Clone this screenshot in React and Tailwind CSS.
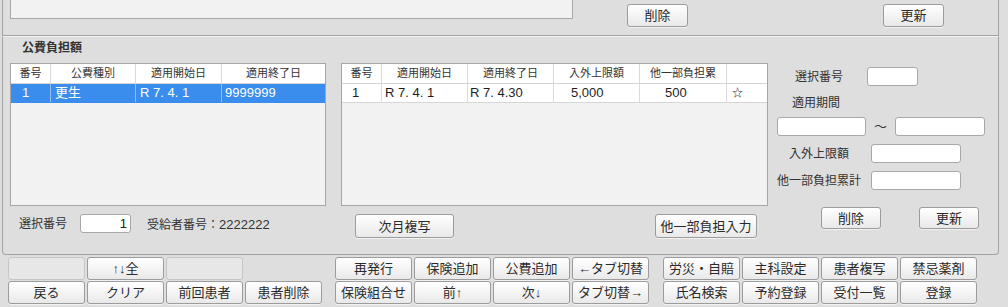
import React from "react";

const FONT = { fontFamily: '"Liberation Sans", "Noto Sans CJK JP", sans-serif' };

function Btn({ children, className = "" }) {
  return (
    <div
      className={
        "flex items-center justify-center rounded-[3px] border border-[#9c9c9c] bg-gradient-to-b from-[#ffffff] to-[#e9e9e9] text-[13px] leading-none text-[#2a2a2a] whitespace-nowrap shadow-[0_1px_0_rgba(255,255,255,0.6)] " +
        className
      }
    >
      {children}
    </div>
  );
}

function Blank() {
  return <div className="h-[23px] w-[77px] rounded-[3px] border border-[#c6c6c6] bg-[#e7e7e7]" />;
}

function Input({ className = "", children }) {
  return (
    <div
      className={
        "flex h-[19px] items-center rounded-[3px] border border-[#a8a8a8] bg-white text-[13px] text-[#222] " +
        className
      }
    >
      {children}
    </div>
  );
}

function Table({ cols, head, row, selected }) {
  return (
    <div className="h-[143px] w-full border border-[#a6a6a6] bg-[#f2f2f2]">
      <div className="flex h-[20px] border-b border-[#d6d6d6] bg-white">
        {cols.map((w, i) => (
          <div
            key={i}
            style={{ width: w }}
            className={
              "flex items-center justify-center text-[11px] text-[#333] whitespace-nowrap overflow-hidden " +
              (i < cols.length - 1 ? "border-r border-[#dadada]" : "")
            }
          >
            {head[i]}
          </div>
        ))}
      </div>
      <div
        className={
          "flex h-[19px] border-b " +
          (selected ? "bg-[#3a8dec] border-[#3a8dec] text-white" : "bg-white border-[#d6d6d6] text-[#1e1e1e]")
        }
      >
        {cols.map((w, i) => (
          <div
            key={i}
            style={{ width: w, paddingLeft: row[i][1] }}
            className={
              "flex items-center whitespace-nowrap overflow-hidden " +
              (row[i][0] === "☆" ? "text-[11px] " : "text-[13px] ") +
              (i < cols.length - 1 ? (selected ? "border-r border-[#8fc0f5]" : "border-r border-[#dadada]") : "")
            }
          >
            {row[i][0]}
          </div>
        ))}
      </div>
    </div>
  );
}

export default function App() {
  return (
    <div style={FONT} className="h-[307px] w-[1008px] overflow-hidden bg-[#dedede] text-[#2a2a2a]">
      {/* top section */}
      <div className="ml-[2px] flex h-[36px] w-[997px] items-start border-x border-b border-[#a2a2a2]">
        <div className="ml-[7px] h-[19px] w-[563px] border-x border-b border-[#a8a8a8] bg-[#f2f2f2]" />
        <Btn className="ml-[54px] mt-[4px] h-[23px] w-[61px]">削除</Btn>
        <Btn className="ml-[195px] mt-[4px] h-[23px] w-[61px]">更新</Btn>
      </div>

      {/* group */}
      <div className="ml-[2px] h-[219px] w-[997px] rounded-b-[4px] border-x border-b border-t border-[#a2a2a2] border-t-[#f3f3f3]">
        <div className="h-[26px] pl-[19px] pt-[3px] text-[12px] leading-[16px] font-bold text-[#333]">公費負担額</div>
        <div className="flex">
          {/* left column */}
          <div className="ml-[7px] w-[316px]">
            <Table
              cols={[40, 85, 86, 103]}
              head={["番号", "公費種別", "適用開始日", "適用終了日"]}
              row={[["1", 11], ["更生", 4], ["R 7. 4. 1", 4], ["9999999", 3]]}
              selected
            />
            <div className="mt-[8px] flex h-[19px] items-center">
              <span className="ml-[9px] w-[48px] text-[12px] whitespace-nowrap text-[#333]">選択番号</span>
              <Input className="ml-[13px] w-[51px] justify-end pr-[3px]">1</Input>
              <span className="ml-[16px] mt-[3px] text-[12px] whitespace-nowrap text-[#333]">
                受給者番号：<span className="text-[13px]">2222222</span>
              </span>
            </div>
          </div>

          {/* middle column */}
          <div className="ml-[15px] w-[427px]">
            <Table
              cols={[40, 86, 86, 86, 87, 40]}
              head={["番号", "適用開始日", "適用終了日", "入外上限額", "他一部負担累", ""]}
              row={[["1", 10], ["R 7. 4. 1", 3], ["R 7. 4.30", 2], ["5,000", 17], ["500", 25], ["☆", 5]]}
            />
            <div className="mt-[8px] flex">
              <Btn className="ml-[14px] h-[24px] w-[99px]">次月複写</Btn>
              <Btn className="ml-[201px] h-[24px] w-[102px]">他一部負担入力</Btn>
            </div>
          </div>

          {/* right column */}
          <div className="flex-1 text-[12px] text-[#333]">
            <div className="mt-[4px] flex h-[19px] items-center">
              <span className="ml-[27px] w-[48px] whitespace-nowrap">選択番号</span>
              <Input className="ml-[24px] w-[51px]" />
            </div>
            <div className="ml-[24px] mt-[9px] h-[16px] leading-[16px] whitespace-nowrap">適用期間</div>
            <div className="mt-[6px] flex h-[19px] items-center">
              <Input className="ml-[9px] w-[89px]" />
              <span className="flex w-[29px] justify-center text-[13px]">〜</span>
              <Input className="w-[90px]" />
            </div>
            <div className="mt-[8px] flex h-[19px] items-center">
              <span className="ml-[21px] w-[82px] whitespace-nowrap">入外上限額</span>
              <Input className="w-[90px]" />
            </div>
            <div className="mt-[8px] flex h-[19px] items-center">
              <span className="ml-[9px] w-[94px] whitespace-nowrap">他一部負担累計</span>
              <Input className="w-[90px]" />
            </div>
            <div className="mt-[17px] flex">
              <Btn className="ml-[53px] h-[22px] w-[60px]">削除</Btn>
              <Btn className="ml-[38px] h-[22px] w-[60px]">更新</Btn>
            </div>
          </div>
        </div>
      </div>

      {/* bottom buttons */}
      <div className="flex pt-[2px]">
        <div className="ml-[8px] grid grid-cols-[repeat(4,77px)] gap-x-[2px] gap-y-[1px]">
          <Blank />
          <Btn className="h-[23px]">↑↓全</Btn>
          <Blank />
          <div />
          <Btn className="h-[23px]">戻る</Btn>
          <Btn className="h-[23px]">クリア</Btn>
          <Btn className="h-[23px]">前回患者</Btn>
          <Btn className="h-[23px]">患者削除</Btn>
        </div>
        <div className="ml-[13px] grid grid-cols-[repeat(4,77px)] gap-x-[2px] gap-y-[1px]">
          <Btn className="h-[23px]">再発行</Btn>
          <Btn className="h-[23px]">保険追加</Btn>
          <Btn className="h-[23px]">公費追加</Btn>
          <Btn className="h-[23px]">←タブ切替</Btn>
          <Btn className="h-[23px]">保険組合せ</Btn>
          <Btn className="h-[23px]">前↑</Btn>
          <Btn className="h-[23px]">次↓</Btn>
          <Btn className="h-[23px]">タブ切替→</Btn>
        </div>
        <div className="ml-[14px] grid grid-cols-[repeat(4,77px)] gap-x-[2px] gap-y-[1px]">
          <Btn className="h-[23px]">労災・自賠</Btn>
          <Btn className="h-[23px]">主科設定</Btn>
          <Btn className="h-[23px]">患者複写</Btn>
          <Btn className="h-[23px]">禁忌薬剤</Btn>
          <Btn className="h-[23px]">氏名検索</Btn>
          <Btn className="h-[23px]">予約登録</Btn>
          <Btn className="h-[23px]">受付一覧</Btn>
          <Btn className="h-[23px]">登録</Btn>
        </div>
      </div>
    </div>
  );
}
